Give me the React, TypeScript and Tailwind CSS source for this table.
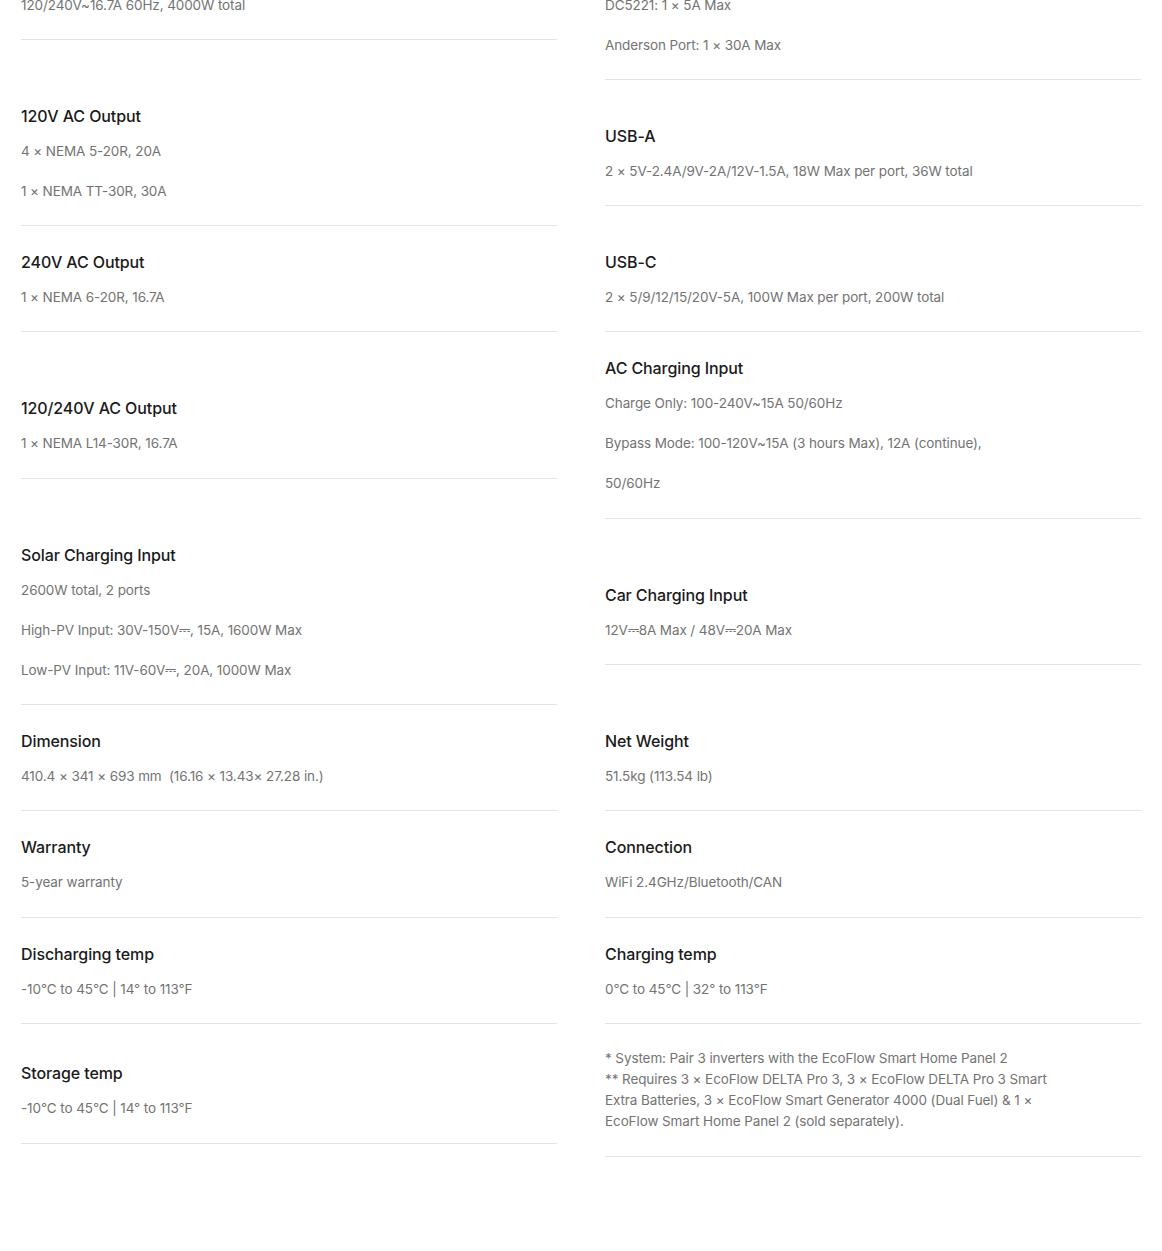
import React from 'react'

interface Spec {
    title: string
    lines: React.ReactNode[]
}

const rows: [Spec, Spec | 'note'][] = [
    [
        { title: 'AC Output', lines: ['120/240V~16.7A 60Hz, 4000W total'] },
        {
            title: 'DC Output',
            lines: ['Car Outlet: 1 × 12V, 10A Max', 'DC5221: 1 × 5A Max', 'Anderson Port: 1 × 30A Max'],
        },
    ],
    [
        { title: '120V AC Output', lines: ['4 × NEMA 5-20R, 20A', '1 × NEMA TT-30R, 30A'] },
        { title: 'USB-A', lines: ['2 × 5V-2.4A/9V-2A/12V-1.5A, 18W Max per port, 36W total'] },
    ],
    [
        { title: '240V AC Output', lines: ['1 × NEMA 6-20R, 16.7A'] },
        { title: 'USB-C', lines: ['2 × 5/9/12/15/20V-5A, 100W Max per port, 200W total'] },
    ],
    [
        { title: '120/240V AC Output', lines: ['1 × NEMA L14-30R, 16.7A'] },
        {
            title: 'AC Charging Input',
            lines: [
                'Charge Only: 100-240V~15A 50/60Hz',
                <>
                    Bypass Mode: 100-120V~15A (3 hours Max), 12A (continue),
                    <br />
                    50/60Hz
                </>,
            ],
        },
    ],
    [
        {
            title: 'Solar Charging Input',
            lines: [
                '2600W total, 2 ports',
                'High-PV Input: 30V-150V⎓, 15A, 1600W Max',
                'Low-PV Input: 11V-60V⎓, 20A, 1000W Max',
            ],
        },
        { title: 'Car Charging Input', lines: ['12V⎓8A Max / 48V⎓20A Max'] },
    ],
    [
        { title: 'Dimension', lines: ['410.4 × 341 × 693 mm \u00a0(16.16 × 13.43× 27.28 in.)'] },
        { title: 'Net Weight', lines: ['51.5kg (113.54 lb)'] },
    ],
    [
        { title: 'Warranty', lines: ['5-year warranty'] },
        { title: 'Connection', lines: ['WiFi 2.4GHz/Bluetooth/CAN'] },
    ],
    [
        { title: 'Discharging temp', lines: ['-10°C to 45°C | 14° to 113°F'] },
        { title: 'Charging temp', lines: ['0°C to 45°C | 32° to 113°F'] },
    ],
    [{ title: 'Storage temp', lines: ['-10°C to 45°C | 14° to 113°F'] }, 'note'],
]

function SpecCell({ spec }: { spec: Spec }) {
    return (
        <div className="border-b border-[#e3e3e3] pt-[21px] pb-[14.3px]">
            <h3 className="text-base font-medium leading-[30px] tracking-[-0.1px] text-[#1a1a1a]">
                {spec.title}
            </h3>
            {spec.lines.map((line, i) => (
                <p key={i} className="text-[13.5px] leading-[40px] tracking-[-0.1px] text-[#737373]">
                    {line}
                </p>
            ))}
        </div>
    )
}

function Note() {
    return (
        <div className="border-b border-[#e3e3e3] py-6 text-[13.5px] leading-[21px] tracking-[-0.1px] text-[#737373]">
            * System: Pair 3 inverters with the EcoFlow Smart Home Panel 2
            <br />
            ** Requires 3 × EcoFlow DELTA Pro 3, 3 × EcoFlow DELTA Pro 3 Smart
            <br />
            Extra Batteries, 3 × EcoFlow Smart Generator 4000 (Dual Fuel) &amp; 1 ×
            <br />
            EcoFlow Smart Home Panel 2 (sold separately).
        </div>
    )
}

export default function App() {
    return (
        <div
            className="h-[1251px] overflow-hidden bg-white"
            style={{ fontFamily: 'Inter, "Noto Sans", sans-serif' }}
        >
            <div className="-mt-[106.5px] grid grid-cols-2 items-center gap-x-12 px-[21px]">
                {rows.map(([left, right], i) => (
                    <React.Fragment key={i}>
                        <SpecCell spec={left} />
                        {right === 'note' ? <Note /> : <SpecCell spec={right} />}
                    </React.Fragment>
                ))}
            </div>
        </div>
    )
}
